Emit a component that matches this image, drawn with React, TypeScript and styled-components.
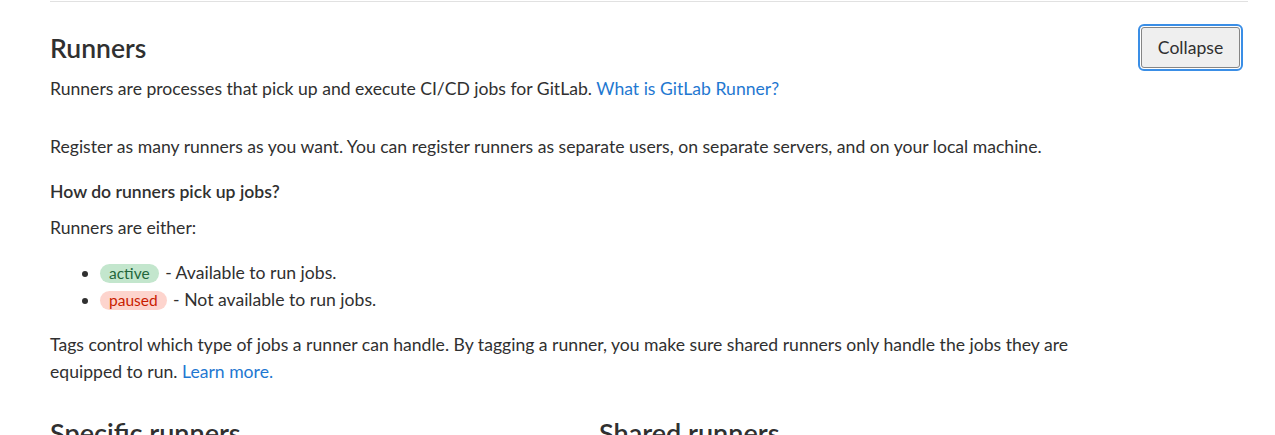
import React from "react";
import styled, { createGlobalStyle } from "styled-components";

const Global = createGlobalStyle`
  html, body { margin: 0; padding: 0; background: #fff; }
  body {
    font-family: "Segoe UI", Lato, "Noto Sans", sans-serif;
    font-size: 17.6px;
    color: #303030;
    overflow: hidden;
  }
`;

const Page = styled.div`
  padding: 1px 27px 0 50px;
`;

const Section = styled.section`
  border-top: 1px solid #e1e1e1;
`;

const Header = styled.div`
  display: flex;
  align-items: center;
  justify-content: space-between;
  padding: 25px 8px 0 0;
  height: 41px;
`;

const Title = styled.h4`
  margin: 0;
  font-size: 26.5px;
  font-weight: 600;
  line-height: 32px;
  color: #303030;
`;

const Button = styled.button`
  font-family: inherit;
  font-size: 17.6px;
  color: #303030;
  background: #efefef;
  border: 1px solid #858585;
  border-radius: 3px;
  height: 41px;
  width: 99px;
  padding: 0;
  outline: 2px solid #3a8ee6;
  outline-offset: 1px;
`;

const Content = styled.div`
  max-width: 1080px;
`;

const Text = styled.p<{ $mb?: number; $mt?: number }>`
  margin: ${(p) => p.$mt ?? 0}px 0 ${(p) => p.$mb ?? 0}px;
  line-height: 27px;
`;

const Strong = styled.p<{ $mb?: number }>`
  margin: 0 0 ${(p) => p.$mb ?? 0}px;
  line-height: 27px;
  font-weight: 600;
`;

const Link = styled.a`
  color: #1f78d1;
  text-decoration: none;
`;

const List = styled.ul`
  margin: 0 0 18px;
  padding-left: 50px;
  line-height: 27px;
`;

const Badge = styled.span<{ $tone: "success" | "danger" }>`
  display: inline-block;
  font-size: 15.5px;
  line-height: 19px;
  padding: 0 9px;
  border-radius: 10px;
  margin-right: 2px;
  background: ${(p) => (p.$tone === "success" ? "#c3e6cd" : "#fdd4cd")};
  color: ${(p) => (p.$tone === "success" ? "#24663b" : "#c91c00")};
`;

const Columns = styled.div`
  display: grid;
  grid-template-columns: 1fr 1fr;
  max-width: 1098px;
  margin-top: 32px;
`;

const SubTitle = styled.h4`
  margin: 0;
  font-size: 27px;
  font-weight: 600;
  line-height: 32px;
  color: #303030;
`;

export default function App() {
  return (
    <Page>
      <Global />
      <Section>
        <Header>
          <Title>Runners</Title>
          <Button type="button">Collapse</Button>
        </Header>
        <Content>
          <Text $mt={7} $mb={31}>
            Runners are processes that pick up and execute CI/CD jobs for GitLab.{" "}
            <Link href="#">What is GitLab Runner?</Link>
          </Text>
          <Text $mb={18}>
            Register as many runners as you want. You can register runners as separate users, on
            separate servers, and on your local machine.
          </Text>
          <Strong $mb={9}>How do runners pick up jobs?</Strong>
          <Text $mb={18}>Runners are either:</Text>
          <List>
            <li>
              <Badge $tone="success">active</Badge> - Available to run jobs.
            </li>
            <li>
              <Badge $tone="danger">paused</Badge> - Not available to run jobs.
            </li>
          </List>
          <Text>
            Tags control which type of jobs a runner can handle. By tagging a runner, you make sure
            shared runners only handle the jobs they are equipped to run.{" "}
            <Link href="#">Learn more.</Link>
          </Text>
        </Content>
        <Columns>
          <SubTitle>Specific runners</SubTitle>
          <SubTitle>Shared runners</SubTitle>
        </Columns>
      </Section>
    </Page>
  );
}
